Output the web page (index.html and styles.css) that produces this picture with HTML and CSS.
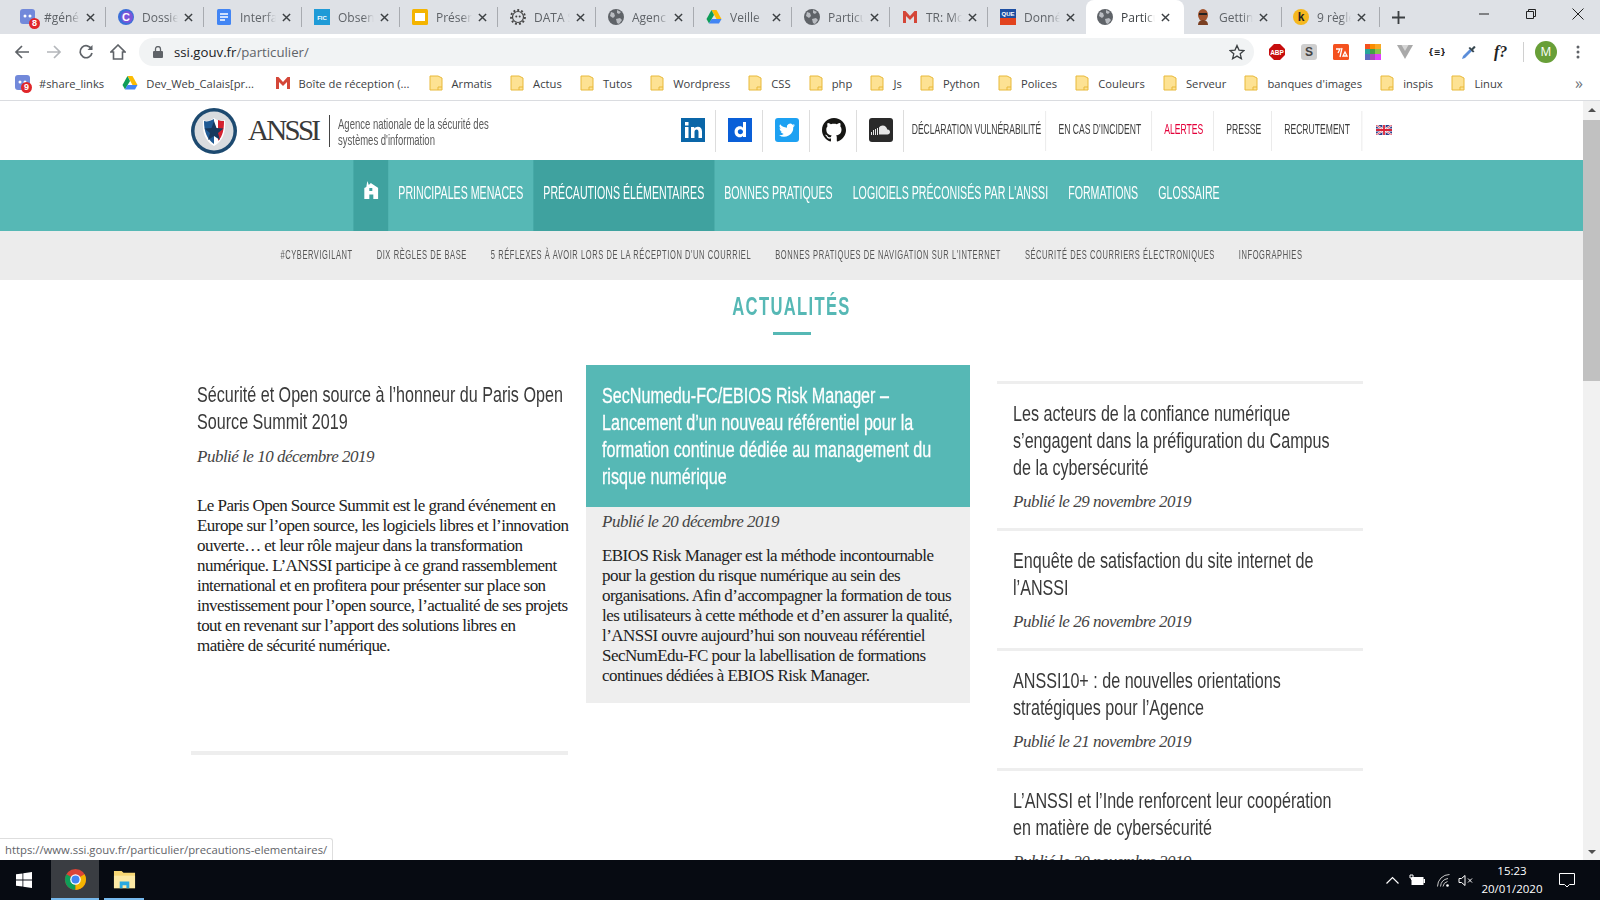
FILE: index.html
```html
<!DOCTYPE html>
<html lang="fr">
<head>
<meta charset="utf-8">
<title>Particuliers - ANSSI</title>
<link rel="stylesheet" href="styles.css">
</head>
<body>
<svg class="defs" width="0" height="0">
  <symbol id="i-globe" viewBox="0 0 16 16"><circle cx="8" cy="8" r="8" fill="#5f6368"/><path d="M3 3l3 1 1 3-2 2-3-2zM9 1l4 2-2 2-2-1zM8 10l4-1 2 2-3 4-2-1z" fill="#b9bcc1"/></symbol>
  <symbol id="i-discord" viewBox="0 0 16 16"><rect x="0" y="0" width="15" height="15" rx="3" fill="#7289da"/><circle cx="5" cy="7" r="1.5" fill="#fff"/><circle cx="10" cy="7" r="1.5" fill="#fff"/></symbol>
  <symbol id="i-drive" viewBox="0 0 16 16"><path d="M5.5 1h5l5 9h-5z" fill="#fbbc04"/><path d="M5.5 1L.5 10l2.500 4.500L8 6z" fill="#0f9d58"/><path d="M3 14.500h10l2.500-4.500h-10z" fill="#4285f4"/></symbol>
  <symbol id="i-gmail" viewBox="0 0 16 16"><path d="M1 2h2.500L8 7l4.500-5H15v12h-3V7L8 11 4 7v7H1z" fill="#d44638"/></symbol>
  <symbol id="i-folder" viewBox="0 0 14 16"><path d="M1 1h8l4 2v12H1z" fill="#fde293" stroke="#e8b93a"/><path d="M9 15v-3h4" fill="none" stroke="#e8b93a"/></symbol>
  <symbol id="i-close" viewBox="0 0 10 10"><path d="M1 1l8 8M9 1L1 9" stroke="#3c4043" stroke-width="1.600"/></symbol>
</svg>

<div class="tabstrip">
  <div class="tab">
    <svg class="fav"><use href="#i-discord"/></svg><span class="badge">8</span>
    <span class="tab-title">#géné</span><svg class="tab-x"><use href="#i-close"/></svg>
  </div>
  <div class="tab">
    <svg class="fav" viewBox="0 0 16 16"><circle cx="8" cy="8" r="8" fill="#3b6fd8"/><circle cx="9" cy="8" r="6" fill="#7b56d9"/><text x="8" y="11.500" class="fav-letter">C</text></svg>
    <span class="tab-title">Dossie</span><svg class="tab-x"><use href="#i-close"/></svg>
  </div>
  <div class="tab">
    <svg class="fav" viewBox="0 0 16 16"><rect x="1" width="14" height="16" rx="1.500" fill="#4285f4"/><path d="M4 5h8M4 8h8M4 11h5" stroke="#fff" stroke-width="1.300"/></svg>
    <span class="tab-title">Interfa</span><svg class="tab-x"><use href="#i-close"/></svg>
  </div>
  <div class="tab">
    <svg class="fav" viewBox="0 0 16 16"><rect width="16" height="16" fill="#1f9bd7"/><text x="8" y="11" class="fav-tiny">FIC</text></svg>
    <span class="tab-title">Obsen</span><svg class="tab-x"><use href="#i-close"/></svg>
  </div>
  <div class="tab">
    <svg class="fav" viewBox="0 0 16 16"><rect width="16" height="16" rx="1.500" fill="#f4b400"/><rect x="3" y="4" width="10" height="8" fill="#fff"/></svg>
    <span class="tab-title">Présen</span><svg class="tab-x"><use href="#i-close"/></svg>
  </div>
  <div class="tab">
    <svg class="fav" viewBox="0 0 16 16"><circle cx="8" cy="8" r="5.500" fill="none" stroke="#444" stroke-width="1.200"/><circle cx="8" cy="8" r="7" fill="none" stroke="#444" stroke-width="1.800" stroke-dasharray="2 2"/><circle cx="6.300" cy="7.500" r="1" fill="#444"/><circle cx="9.700" cy="7.500" r="1" fill="#444"/></svg>
    <span class="tab-title">DATA S</span><svg class="tab-x"><use href="#i-close"/></svg>
  </div>
  <div class="tab">
    <svg class="fav"><use href="#i-globe"/></svg>
    <span class="tab-title">Agenc</span><svg class="tab-x"><use href="#i-close"/></svg>
  </div>
  <div class="tab">
    <svg class="fav"><use href="#i-drive"/></svg>
    <span class="tab-title">Veille</span><svg class="tab-x"><use href="#i-close"/></svg>
  </div>
  <div class="tab">
    <svg class="fav"><use href="#i-globe"/></svg>
    <span class="tab-title">Particu</span><svg class="tab-x"><use href="#i-close"/></svg>
  </div>
  <div class="tab">
    <svg class="fav"><use href="#i-gmail"/></svg>
    <span class="tab-title">TR: Mc</span><svg class="tab-x"><use href="#i-close"/></svg>
  </div>
  <div class="tab tab-before-active">
    <svg class="fav" viewBox="0 0 16 16"><rect width="16" height="9" fill="#1d4fa3"/><rect y="9" width="16" height="7" fill="#e2431e"/><text x="8" y="7" class="fav-tiny">QUE</text></svg>
    <span class="tab-title">Donné</span><svg class="tab-x"><use href="#i-close"/></svg>
  </div>
  <div class="tab tab-active">
    <svg class="fav"><use href="#i-globe"/></svg>
    <span class="tab-title">Particu</span><svg class="tab-x"><use href="#i-close"/></svg>
  </div>
  <div class="tab">
    <svg class="fav" viewBox="0 0 16 16"><ellipse cx="8" cy="6" rx="5" ry="6" fill="#a0522d"/><rect x="4" y="4" width="8" height="2" fill="#222"/><path d="M3 16c0-4 3-5 5-5s5 1 5 5z" fill="#7a3f22"/></svg>
    <span class="tab-title">Gettin</span><svg class="tab-x"><use href="#i-close"/></svg>
  </div>
  <div class="tab">
    <svg class="fav" viewBox="0 0 16 16"><circle cx="8" cy="8" r="8" fill="#f5b81f"/><text x="8" y="12" class="fav-k">k</text></svg>
    <span class="tab-title">9 règle</span><svg class="tab-x"><use href="#i-close"/></svg>
  </div>
  <svg class="new-tab" viewBox="0 0 12 12"><path d="M6 0v12M0 6h12" stroke="#3c4043" stroke-width="1.700"/></svg>
  <div class="win-controls">
    <svg viewBox="0 0 12 12"><path d="M1 6h10" stroke="#222"/></svg>
    <svg viewBox="0 0 12 12"><path d="M1.500 3.500h7v7h-7zM3.500 3.500v-2h7v7h-2" fill="none" stroke="#222"/></svg>
    <svg viewBox="0 0 12 12"><path d="M.5.500l11 11M11.500.500l-11 11" stroke="#222"/></svg>
  </div>
</div>

<div class="toolbar">
  <svg class="tb-icon" viewBox="0 0 16 16"><path d="M15 8H2M8 2L2 8l6 6" fill="none" stroke="#5f6368" stroke-width="1.700"/></svg>
  <svg class="tb-icon" viewBox="0 0 16 16"><path d="M1 8h13M8 2l6 6-6 6" fill="none" stroke="#b4b7bb" stroke-width="1.700"/></svg>
  <svg class="tb-icon" viewBox="0 0 16 16"><path d="M13.500 5A6 6 0 1 0 14 9" fill="none" stroke="#5f6368" stroke-width="1.700"/><path d="M14.500 1v5h-5z" fill="#5f6368"/></svg>
  <svg class="tb-icon" viewBox="0 0 16 16"><path d="M8 1L1 8h2.500v7h9V8H15z" fill="none" stroke="#5f6368" stroke-width="1.600"/></svg>
  <div class="omnibox">
    <svg class="lock" viewBox="0 0 10 12"><rect y="5" width="10" height="7" rx="1" fill="#5f6368"/><path d="M2.500 5V3a2.500 2.500 0 0 1 5 0v2" fill="none" stroke="#5f6368" stroke-width="1.300"/></svg>
    <span class="url">ssi.gouv.fr<span class="url-path">/particulier/</span></span>
    <svg class="star" viewBox="0 0 16 16"><path d="M8 1.500l2 4.600 5 .4-3.800 3.300 1.200 4.900L8 12.100l-4.400 2.600 1.200-4.900L1 6.500l5-.4z" fill="none" stroke="#3c4043" stroke-width="1.300"/></svg>
  </div>
  <div class="extensions">
    <svg viewBox="0 0 16 16"><path d="M5 0h6l5 5v6l-5 5H5l-5-5V5z" fill="#c70d0d"/><text x="8" y="10.500" class="ext-abp">ABP</text></svg>
    <svg viewBox="0 0 16 16"><rect width="16" height="16" rx="3" fill="#cfcfcf"/><text x="8" y="12" class="ext-s">S</text></svg>
    <svg viewBox="0 0 16 16"><rect width="16" height="16" rx="1.500" fill="#f4511e"/><path d="M3 5h4L5 9M9 4l-2 9M10 12l2-4 2 4z" fill="none" stroke="#fff" stroke-width="1.300"/></svg>
    <svg viewBox="0 0 16 16"><rect width="6" height="6" fill="#f4511e"/><rect x="5" width="6" height="6" fill="#fb8c00"/><rect x="10" width="6" height="6" fill="#f9a825"/><rect y="5" width="6" height="6" fill="#26a69a"/><rect x="5" y="5" width="6" height="6" fill="#43a047"/><rect x="10" y="5" width="6" height="6" fill="#8bc34a"/><rect y="10" width="6" height="6" fill="#5c6bc0"/><rect x="5" y="10" width="6" height="6" fill="#ab47bc"/><rect x="10" y="10" width="6" height="6" fill="#e040fb"/></svg>
    <svg viewBox="0 0 16 16"><path d="M0 1h16L8 15z" fill="#a9a9a9"/><path d="M4.500 1h7L8 7z" fill="#d6d6d6"/></svg>
    <svg viewBox="0 0 16 16"><text x="8" y="11" class="ext-json">{≡}</text></svg>
    <svg viewBox="0 0 16 16"><path d="M1 15l1-3 7-7 2 2-7 7z" fill="#5b8dd9"/><path d="M9 3l1.500 1.500L13 2a1.500 1.500 0 0 1 1.500 1.500L12 6l1.500 1.500-1.500 1-4.500-4.500z" fill="#37474f"/></svg>
    <span class="ext-f">f?</span>
    <span class="ext-sep"></span>
    <span class="avatar">M</span>
    <svg class="ext-dots" viewBox="0 0 4 16"><circle cx="2" cy="3" r="1.500" fill="#5f6368"/><circle cx="2" cy="8" r="1.500" fill="#5f6368"/><circle cx="2" cy="13" r="1.500" fill="#5f6368"/></svg>
  </div>
</div>

<div class="bookmarks">
  <span class="bm bm-first"><svg class="bm-icon"><use href="#i-discord"/></svg><span class="badge badge-bm">9</span>#share_links</span>
  <span class="bm"><svg class="bm-icon"><use href="#i-drive"/></svg>Dev_Web_Calais[pr...</span>
  <span class="bm bm-mail"><svg class="bm-icon"><use href="#i-gmail"/></svg>Boîte de réception (...</span>
  <span class="bm bm-armatis"><svg class="bm-folder"><use href="#i-folder"/></svg>Armatis</span>
  <span class="bm"><svg class="bm-folder"><use href="#i-folder"/></svg>Actus</span>
  <span class="bm"><svg class="bm-folder"><use href="#i-folder"/></svg>Tutos</span>
  <span class="bm"><svg class="bm-folder"><use href="#i-folder"/></svg>Wordpress</span>
  <span class="bm"><svg class="bm-folder"><use href="#i-folder"/></svg>CSS</span>
  <span class="bm"><svg class="bm-folder"><use href="#i-folder"/></svg>php</span>
  <span class="bm"><svg class="bm-folder"><use href="#i-folder"/></svg>Js</span>
  <span class="bm"><svg class="bm-folder"><use href="#i-folder"/></svg>Python</span>
  <span class="bm"><svg class="bm-folder"><use href="#i-folder"/></svg>Polices</span>
  <span class="bm"><svg class="bm-folder"><use href="#i-folder"/></svg>Couleurs</span>
  <span class="bm"><svg class="bm-folder"><use href="#i-folder"/></svg>Serveur</span>
  <span class="bm"><svg class="bm-folder"><use href="#i-folder"/></svg>banques d'images</span>
  <span class="bm"><svg class="bm-folder"><use href="#i-folder"/></svg>inspis</span>
  <span class="bm"><svg class="bm-folder"><use href="#i-folder"/></svg>Linux</span>
  <span class="bm-more">»</span>
</div>

<div class="viewport">
  <div class="page">
    <header class="site-header">
      <div class="container header-row">
        <svg class="logo" viewBox="0 0 46 46">
          <circle cx="23" cy="23" r="23" fill="#1d4a70"/>
          <circle cx="23" cy="23" r="19.500" fill="#d9dcdf"/>
          <path d="M12 12c4 2 7 1 11-2 4 3 7 4 11 2 1 12-2 21-11 26-9-5-12-14-11-26z" fill="#fff"/>
          <path d="M13 13c3 1 6 0 10-2v25c-7-5-10-12-10-23z" fill="#1f5a94"/>
          <path d="M27 12c2 1 4 1 6 1 0 8-1 15-6 20z" fill="#d4222f"/>
          <path d="M23 13l2.500 7 7 .5-5.500 4.500 2 7-6-4-6 4 2-7-5.500-4.500 7-.5z" fill="#17385c"/>
        </svg>
        <span class="wordmark">ANSSI</span>
        <span class="tagline"><span class="tagline-text">Agence nationale de la sécurité des<br>systèmes d'information</span></span>
        <ul class="socials">
          <li><svg viewBox="0 0 24 24"><rect width="24" height="24" fill="#0a66a8"/><path d="M4 9h3.500v11H4zM4 4h3.500v3.500H4zM10 9h3.300v1.600c.8-1.200 2-1.900 3.500-1.900 2.700 0 4.200 1.700 4.200 4.900V20h-3.500v-5.700c0-1.800-.6-2.700-1.900-2.700s-2.100 1-2.100 2.700V20H10z" fill="#fff"/></svg></li>
          <li><svg viewBox="0 0 24 24"><rect width="24" height="24" fill="#0a5fd8"/><path d="M15 4h3v15h-3v-1.200c-.9 1-2 1.500-3.400 1.500-3 0-5-2.400-5-5.500s2-5.500 5-5.500c1.400 0 2.500.5 3.400 1.400zm-2.700 7.300c-1.500 0-2.500 1.100-2.500 2.500s1 2.500 2.500 2.500 2.700-1.100 2.700-2.500-1.200-2.500-2.700-2.500z" fill="#fff"/></svg></li>
          <li><svg viewBox="0 0 24 24"><rect width="24" height="24" rx="3" fill="#1da1f2"/><path d="M20 7.200c-.6.300-1.200.4-1.900.5.700-.4 1.200-1 1.400-1.800-.6.400-1.300.6-2 .8a3.300 3.300 0 0 0-5.600 3A9.300 9.300 0 0 1 5.100 6.300a3.300 3.300 0 0 0 1 4.400c-.5 0-1-.2-1.500-.4 0 1.600 1.100 3 2.600 3.300-.5.100-1 .1-1.500 0 .4 1.300 1.600 2.200 3 2.300A6.600 6.600 0 0 1 4 17.200a9.300 9.300 0 0 0 14.300-8.300c.7-.4 1.200-1 1.700-1.700z" fill="#fff"/></svg></li>
          <li><svg viewBox="0 0 24 24"><path d="M12 0C5.400 0 0 5.400 0 12c0 5.300 3.400 9.800 8.200 11.400.6.100.8-.3.800-.6v-2.200c-3.300.7-4-1.400-4-1.400-.6-1.400-1.400-1.800-1.400-1.800-1.100-.7.100-.7.100-.7 1.200.1 1.800 1.200 1.800 1.200 1.100 1.800 2.800 1.300 3.500 1 .1-.8.400-1.300.8-1.600-2.700-.3-5.500-1.300-5.500-5.900 0-1.300.5-2.400 1.200-3.200-.1-.3-.5-1.500.1-3.200 0 0 1-.3 3.300 1.200 1-.3 2-.4 3-.4s2 .1 3 .4c2.300-1.500 3.300-1.200 3.300-1.200.7 1.700.2 2.900.1 3.200.8.800 1.200 1.900 1.200 3.200 0 4.600-2.800 5.600-5.500 5.900.4.400.8 1.100.8 2.200v3.300c0 .3.200.7.800.6C20.600 21.800 24 17.300 24 12 24 5.400 18.600 0 12 0z" fill="#161614"/></svg></li>
          <li><svg viewBox="0 0 24 24"><rect width="24" height="24" rx="3" fill="#2a2a2a"/><path d="M10 9.500c.8-1.200 2.200-2 3.700-2 2.400 0 4.300 1.800 4.500 4.100 1.500-.3 2.800.9 2.800 2.400s-1.100 2.500-2.500 2.500H10zM2 14h1v3H2zM4 12h1v5H4zM6 11h1v6H6zM8 10h1v7H8z" fill="#e6e6e6"/></svg></li>
        </ul>
        <div class="top-links">
          <ul class="top-links-list">
            <li class="first">DÉCLARATION VULNÉRABILITÉ</li>
            <li>EN CAS D'INCIDENT</li>
            <li class="alert">ALERTES</li>
            <li>PRESSE</li>
            <li class="last">RECRUTEMENT</li>
          </ul>
        </div>
        <svg class="flag" viewBox="0 0 16 10"><rect width="16" height="10" fill="#2b3f8c"/><path d="M0 0l16 10M16 0L0 10" stroke="#fff" stroke-width="2"/><path d="M0 0l16 10M16 0L0 10" stroke="#d8243a" stroke-width=".8"/><path d="M8 0v10M0 5h16" stroke="#fff" stroke-width="3.200"/><path d="M8 0v10M0 5h16" stroke="#d8243a" stroke-width="1.800"/></svg>
      </div>
    </header>

    <nav class="main-nav">
      <ul class="main-nav-list">
        <li class="home"><svg viewBox="0 0 15 18"><path d="M1 18V7l2-1 1-6 1.500 4L7.500 2 15 7v11h-5v-4.500H6V18zM6 7v3h3V7z" fill="#fff" fill-rule="evenodd"/></svg></li>
        <li>PRINCIPALES MENACES</li>
        <li class="active">PRÉCAUTIONS ÉLÉMENTAIRES</li>
        <li>BONNES PRATIQUES</li>
        <li>LOGICIELS PRÉCONISÉS PAR L'ANSSI</li>
        <li>FORMATIONS</li>
        <li>GLOSSAIRE</li>
      </ul>
    </nav>

    <nav class="sub-nav">
      <ul class="sub-nav-list">
        <li>#CYBERVIGILANT</li>
        <li>DIX RÈGLES DE BASE</li>
        <li>5 RÉFLEXES À AVOIR LORS DE LA RÉCEPTION D'UN COURRIEL</li>
        <li>BONNES PRATIQUES DE NAVIGATION SUR L'INTERNET</li>
        <li>SÉCURITÉ DES COURRIERS ÉLECTRONIQUES</li>
        <li>INFOGRAPHIES</li>
      </ul>
    </nav>

    <main class="container">
      <h1 class="section-title"><span>ACTUALITÉS</span></h1>
      <div class="news">
        <article class="col-left">
          <h2 class="news-title">Sécurité et Open source à l’honneur du Paris Open<br>Source Summit 2019</h2>
          <p class="news-date">Publié le 10 décembre 2019</p>
          <p class="news-body news-body-left">Le Paris Open Source Summit est le grand événement en<br>Europe sur l’open source, les logiciels libres et l’innovation<br>ouverte… et leur rôle majeur dans la transformation<br>numérique. L’ANSSI participe à ce grand rassemblement<br>international et en profitera pour présenter sur place son<br>investissement pour l’open source, l’actualité de ses projets<br>tout en revenant sur l’apport des solutions libres en<br>matière de sécurité numérique.</p>
        </article>
        <article class="col-mid">
          <div class="feature-head">
            <h2 class="news-title news-title-feature">SecNumedu-FC/EBIOS Risk Manager –<br>Lancement d’un nouveau référentiel pour la<br>formation continue dédiée au management du<br>risque numérique</h2>
          </div>
          <div class="feature-text">
            <p class="news-date">Publié le 20 décembre 2019</p>
            <p class="news-body news-body-mid">EBIOS Risk Manager est la méthode incontournable<br>pour la gestion du risque numérique au sein des<br>organisations. Afin d’accompagner la formation de tous<br>les utilisateurs à cette méthode et d’en assurer la qualité,<br>l’ANSSI ouvre aujourd’hui son nouveau référentiel<br>SecNumEdu-FC pour la labellisation de formations<br>continues dédiées à EBIOS Risk Manager.</p>
          </div>
        </article>
        <div class="col-right">
          <article class="side-item">
            <h2 class="news-title">Les acteurs de la confiance numérique<br>s’engagent dans la préfiguration du Campus<br>de la cybersécurité</h2>
            <p class="news-date">Publié le 29 novembre 2019</p>
          </article>
          <article class="side-item">
            <h2 class="news-title">Enquête de satisfaction du site internet de<br>l’ANSSI</h2>
            <p class="news-date">Publié le 26 novembre 2019</p>
          </article>
          <article class="side-item">
            <h2 class="news-title">ANSSI10+ : de nouvelles orientations<br>stratégiques pour l’Agence</h2>
            <p class="news-date">Publié le 21 novembre 2019</p>
          </article>
          <article class="side-item">
            <h2 class="news-title">L’ANSSI et l’Inde renforcent leur coopération<br>en matière de cybersécurité</h2>
            <p class="news-date">Publié le 20 novembre 2019</p>
          </article>
        </div>
      </div>
    </main>
  </div>

  <div class="scrollbar">
    <span class="arrow arrow-up"></span>
    <div class="scroll-track"><div class="scroll-thumb"></div></div>
    <span class="arrow arrow-down"></span>
  </div>

  <div class="status-bubble">https://www.ssi.gouv.fr/particulier/precautions-elementaires/</div>
</div>

<footer class="taskbar">
  <svg class="win-logo" viewBox="0 0 16 16"><path d="M0 2.300l6.500-.9v6.200H0zM7.300 1.300L16 0v7.600H7.300zM0 8.400h6.500v6.200L0 13.700zM7.300 8.400H16V16l-8.700-1.300z" fill="#fff"/></svg>
  <div class="task task-active">
    <svg viewBox="0 0 24 24"><circle cx="12" cy="12" r="11" fill="#db4437"/><path d="M12 12L2.500 6.500A11 11 0 0 0 12 23z" fill="#0f9d58"/><path d="M12 12l9.500-5.500A11 11 0 0 1 12 23z" fill="#f4b400"/><circle cx="12" cy="12" r="5.500" fill="#fff"/><circle cx="12" cy="12" r="4.200" fill="#4285f4"/></svg>
  </div>
  <div class="task task-folder">
    <svg viewBox="0 0 24 24"><path d="M1 3h8l2 2h12v16H1z" fill="#f7d774"/><rect x="1" y="8" width="22" height="13" fill="#fce9a4"/><path d="M7 21v-7h10v7h-3v-3h-4v3z" fill="#2aa9e0"/></svg>
  </div>
  <div class="tray">
    <svg class="tray-chevron" viewBox="0 0 13 8"><path d="M.5 7.500L6.500 1.500l6 6" fill="none" stroke="#fff" stroke-width="1.200"/></svg>
    <svg class="tray-battery" viewBox="0 0 16 12"><path d="M1 1h3v3H1zM2.500 4v2" fill="none" stroke="#fff"/><rect x="3" y="3.500" width="11" height="7" fill="#fff" stroke="#fff"/><rect x="14.500" y="5" width="1.500" height="4" fill="#fff"/></svg>
    <svg class="tray-wifi" viewBox="0 0 13 13"><path d="M.5 12.500A12 12 0 0 1 12.500.500M3.500 12.500A9 9 0 0 1 11 4.500M6 12.500A6 6 0 0 1 10.500 7.500" fill="none" stroke="#c8c8c8" stroke-width="1"/><circle cx="10.500" cy="11.500" r="1.300" fill="#fff"/></svg>
    <svg class="tray-sound" viewBox="0 0 15 13"><path d="M1 4.500h2.500L7 1.500v10L3.500 8.500H1z" fill="none" stroke="#fff"/><path d="M10 4.500l4 4M14 4.500l-4 4" stroke="#fff"/></svg>
    <div class="clock"><span>15:23</span><span>20/01/2020</span></div>
    <svg class="tray-notify" viewBox="0 0 16 15"><path d="M.5.500h15v11h-5l-2.500 2.500-2.500-2.500h-5z" fill="none" stroke="#fff"/></svg>
  </div>
</footer>
</body>
</html>
```

FILE: styles.css
```css
* {
  box-sizing: border-box;
}
html, body {
  margin: 0;
  height: 100%;
  overflow: hidden;
}
body {
  width: 1600px;
  height: 900px;
  display: flex;
  flex-direction: column;
  background: #fff;
  font-family: "Open Sans", "Noto Sans", sans-serif;
}
ul {
  list-style: none;
  margin: 0;
  padding: 0;
}
h1, h2, p {
  margin: 0;
  font-weight: normal;
}
.defs {
  position: absolute;
}

/* browser tabs */
.tabstrip {
  height: 34px;
  flex: none;
  display: flex;
  padding-left: 8px;
  background: #dee1e6;
}
.tab {
  position: relative;
  width: 98px;
  height: 34px;
  flex: none;
  display: flex;
  align-items: center;
  padding-left: 12px;
  font-size: 12px;
  color: #5f6368;
}
.tab::after {
  content: "";
  position: absolute;
  right: 0;
  top: 7px;
  width: 1px;
  height: 20px;
  background: #a8abb0;
}
.tab-before-active::after, .tab-active::after {
  display: none;
}
.tab-active {
  background: #fff;
  border-radius: 8px 8px 0 0;
  color: #3c4043;
}
.tab-active, .tab-active ~ .tab {
  padding-left: 11px;
}
.tab-active .tab-title, .tab-active ~ .tab .tab-title {
  width: 34px;
}
.fav {
  width: 16px;
  height: 16px;
  flex: none;
}
.fav-letter {
  font: bold 11px "Liberation Sans", sans-serif;
  fill: #fff;
  text-anchor: middle;
}
.fav-tiny {
  font: bold 6px "Liberation Sans", sans-serif;
  fill: #fff;
  text-anchor: middle;
}
.fav-k {
  font: bold 12px "Liberation Sans", sans-serif;
  fill: #222;
  text-anchor: middle;
}
.badge {
  position: absolute;
  left: 21px;
  top: 18px;
  width: 11px;
  height: 11px;
  border-radius: 50%;
  background: #e0262a;
  color: #fff;
  font: bold 9px/11px "Liberation Sans", sans-serif;
  text-align: center;
}
.tab-title {
  width: 36px;
  margin-left: 8px;
  white-space: nowrap;
  -webkit-mask-image: linear-gradient(to right, #000 70%, transparent);
  mask-image: linear-gradient(to right, #000 70%, transparent);
}
.tab-x {
  width: 9px;
  height: 9px;
  margin-left: 6px;
  flex: none;
}
.new-tab {
  width: 13px;
  height: 13px;
  margin: 11px 0 0 12px;
  flex: none;
}
.win-controls {
  margin-left: auto;
  display: flex;
  gap: 35px;
  padding: 8px 16px 0 0;
}
.win-controls svg {
  width: 12px;
  height: 12px;
}

/* browser toolbar */
.toolbar {
  height: 34px;
  flex: none;
  display: flex;
  align-items: center;
  padding: 2px 0 0 14px;
  background: #fff;
}
.tb-icon {
  width: 16px;
  height: 16px;
  margin-right: 16px;
  flex: none;
}
.toolbar .tb-icon:nth-child(4) {
  margin-right: 13px;
}
.omnibox {
  width: 1115px;
  height: 28px;
  flex: none;
  display: flex;
  align-items: center;
  padding: 0 9px 0 14px;
  border-radius: 14px;
  background: #f1f3f4;
}
.lock {
  width: 10px;
  height: 12px;
  margin-right: 11px;
}
.url {
  font-size: 13.200px;
  color: #202124;
}
.url-path {
  color: #5f6368;
}
.star {
  width: 16px;
  height: 16px;
  margin-left: auto;
}
.extensions {
  display: flex;
  align-items: center;
  margin-left: 15px;
}
.extensions svg {
  width: 16px;
  height: 16px;
  margin-right: 16px;
  flex: none;
}
.ext-abp {
  font: bold 6.500px "Liberation Sans", sans-serif;
  fill: #fff;
  text-anchor: middle;
}
.ext-s {
  font: bold 12px "Liberation Sans", sans-serif;
  fill: #444;
  text-anchor: middle;
}
.ext-json {
  font: bold 8px "DejaVu Sans", sans-serif;
  fill: #222;
  text-anchor: middle;
}
.ext-f {
  width: 17px;
  margin-left: 1px;
  font: italic bold 16px "Liberation Serif", serif;
  color: #222;
}
.ext-sep {
  width: 1px;
  height: 20px;
  margin: 0 11px 0 12px;
  background: #d0d0d0;
}
.avatar {
  width: 22px;
  height: 22px;
  flex: none;
  border-radius: 50%;
  background: #689f38;
  color: #fff;
  font-size: 12px;
  line-height: 22px;
  text-align: center;
}
.extensions .ext-dots {
  width: 4px;
  margin: 0 0 0 19px;
}

/* bookmarks bar */
.bookmarks {
  height: 33px;
  flex: none;
  display: flex;
  align-items: center;
  gap: 18.200px;
  padding: 0 0 2px 15px;
  background: #fff;
  border-bottom: 1px solid #dadce0;
  font-size: 11.200px;
  color: #3c4043;
}
.bm {
  position: relative;
  display: flex;
  align-items: center;
  white-space: nowrap;
}
.bm-mail {
  margin-left: 2.500px;
}
.bm-armatis {
  margin-left: 1px;
}
.bm-icon {
  width: 16px;
  height: 16px;
  margin-right: 8px;
  flex: none;
}
.bm-folder {
  width: 14px;
  height: 16px;
  margin-right: 9px;
  flex: none;
}
.badge-bm {
  left: 6px;
  top: 7px;
}
.bm-more {
  margin-left: auto;
  margin-right: 17px;
  font-size: 16px;
  color: #70757a;
}

/* page */
.viewport {
  position: relative;
  flex: 1;
  min-height: 0;
  display: flex;
}
.page {
  flex: 1;
  min-width: 0;
  overflow: hidden;
}
.container {
  width: 1201px;
  margin: 0 auto;
}
.header-row {
  height: 59px;
  display: flex;
  align-items: center;
}
.logo {
  width: 46px;
  height: 46px;
  flex: none;
}
.wordmark {
  margin-left: 11px;
  font: 29px "Liberation Serif", serif;
  letter-spacing: -2.700px;
  color: #3a3a3a;
}
.tagline {
  height: 32px;
  width: 170px;
  margin-left: 11px;
  padding: 1px 0 0 8px;
  border-left: 1px solid #444;
  flex: none;
}
.tagline-text {
  display: block;
  width: 240px;
  font: 15px/16px "Liberation Sans", sans-serif;
  color: #5a5a5a;
  white-space: nowrap;
  transform: scaleX(.634);
  transform-origin: left;
}
.socials {
  display: flex;
  margin-left: auto;
}
.socials li {
  width: 47px;
  height: 42px;
  display: flex;
  align-items: center;
  justify-content: center;
  padding: 0 0 2px 2px;
  border-right: 1px solid #ddd;
}
.socials svg {
  width: 24px;
  height: 24px;
}
.top-links {
  width: 457px;
  flex: none;
}
.top-links-list {
  display: flex;
  width: 772px;
  transform: scaleX(.592);
  transform-origin: left;
  font: 14.500px "Liberation Sans", sans-serif;
  color: #3d3d3d;
  white-space: nowrap;
}
.top-links-list li {
  height: 40px;
  line-height: 36px;
  padding: 0 17px 0 21px;
  border-right: 1.700px solid #ddd;
}
.top-links-list .first {
  padding-left: 13px;
  padding-right: 7px;
}
.top-links-list .last {
  padding-right: 20px;
}
.top-links-list .alert {
  color: #e4003a;
}
.flag {
  width: 16px;
  height: 10px;
  margin: 0 0 2px 15px;
  flex: none;
}

.main-nav {
  height: 71px;
  background: #56b8b5;
}
.main-nav-list {
  display: flex;
  justify-content: center;
  width: calc(100% / .59);
  height: 71px;
  transform: scaleX(.59);
  transform-origin: left;
  font: 18px/67px "Liberation Sans", sans-serif;
  color: #fff;
  white-space: nowrap;
}
.main-nav-list li {
  padding: 0 17px;
}
.main-nav-list .active, .main-nav-list .home {
  background: #3fa29f;
}
.main-nav-list .home {
  width: 59.300px;
  padding: 21px 0 0;
  flex: none;
}
.home svg {
  display: block;
  width: 15px;
  height: 18px;
  margin: 0 auto;
  transform: scaleX(1.695);
}

.sub-nav {
  height: 49px;
  background: #ececec;
}
.sub-nav-list {
  display: flex;
  justify-content: center;
  gap: 41.500px;
  width: calc(100% / .578);
  transform: scaleX(.578);
  transform-origin: left;
  font: 13px/48px "Liberation Sans", sans-serif;
  letter-spacing: 1px;
  color: #555;
  white-space: nowrap;
}

.section-title {
  height: 85px;
  padding-top: 11px;
  text-align: center;
  font: bold 25px/30px "Liberation Sans", sans-serif;
  letter-spacing: 2px;
  color: #56b8b5;
}
.section-title span {
  display: block;
  transform: scaleX(.664);
}
.section-title::after {
  content: "";
  display: block;
  width: 38px;
  height: 3px;
  margin: 11px auto 0;
  background: #56b8b5;
}
.news {
  display: flex;
  align-items: flex-start;
}
.news-title {
  width: 520px;
  font: 22.500px/27px "Liberation Sans", sans-serif;
  color: #3a3a3a;
  white-space: nowrap;
  transform: scaleX(.717);
  transform-origin: left;
}
.news-title-feature {
  color: #fff;
  -webkit-text-stroke: .3px #fff;
}
.news-date {
  font: italic 17px/20px "Liberation Serif", serif;
  letter-spacing: -.5px;
  color: #444;
}
.news-body {
  font: 17px/20px "Liberation Serif", serif;
  letter-spacing: -.55px;
  color: #222;
  white-space: nowrap;
}
.col-left {
  width: 377px;
  height: 390px;
  margin-right: 18px;
  padding: 16px 6px 0;
  border-bottom: 4px solid #eee;
}
.col-left .news-date {
  margin-top: 12px;
}
.news-body-left {
  margin-top: 29px;
}
.col-mid {
  width: 384px;
  margin-right: 27px;
  background: #eee;
}
.feature-head {
  height: 142px;
  padding: 17px 16px 0;
  background: #56b8b5;
}
.feature-text {
  padding: 5px 16px 17px;
}
.news-body-mid {
  margin-top: 14px;
}
.col-right {
  width: 366px;
  margin-top: 16px;
}
.side-item {
  padding: 16px 16px 16px;
  border-top: 3px solid #eee;
}
.side-item .news-date {
  margin-top: 11px;
}

/* scrollbar and status */
.scrollbar {
  width: 17px;
  flex: none;
  display: flex;
  flex-direction: column;
  background: #f1f1f1;
}
.arrow {
  height: 17px;
  flex: none;
  display: flex;
  align-items: center;
  justify-content: center;
}
.arrow::before {
  content: "";
  border-left: 4px solid transparent;
  border-right: 4px solid transparent;
}
.arrow-up::before {
  border-bottom: 4px solid #505050;
}
.arrow-down::before {
  border-top: 4px solid #505050;
}
.scroll-track {
  flex: 1;
  padding-top: 2px;
}
.scroll-thumb {
  height: 261px;
  background: #c1c1c1;
}
.status-bubble {
  position: absolute;
  left: 0;
  bottom: 0;
  width: 333px;
  height: 22px;
  padding-left: 5px;
  background: #fff;
  border-top: 1px solid #dedede;
  border-right: 1px solid #dedede;
  border-top-right-radius: 3px;
  font-size: 11.300px;
  line-height: 21px;
  color: #5f6368;
  white-space: nowrap;
}

/* windows taskbar */
.taskbar {
  height: 40px;
  flex: none;
  display: flex;
  align-items: stretch;
  background: #070b12;
  color: #fff;
}
.win-logo {
  width: 16px;
  height: 16px;
  margin: 12px 19px 0 16px;
  flex: none;
}
.task {
  width: 48px;
  display: flex;
  align-items: center;
  justify-content: center;
  border-bottom: 2px solid #76b9ed;
  margin-right: 5px;
}
.task-active {
  background: #3a3d42;
}
.task-folder {
  width: 40px;
}
.task svg {
  width: 23px;
  height: 23px;
}
.tray {
  margin-left: auto;
  display: flex;
  align-items: center;
  padding-right: 25px;
}
.tray-chevron {
  width: 13px;
  height: 8px;
  margin-right: 10px;
}
.tray-battery {
  width: 16px;
  height: 12px;
  margin-right: 12px;
}
.tray-wifi {
  width: 13px;
  height: 13px;
  margin-right: 8px;
}
.tray-sound {
  width: 15px;
  height: 13px;
  margin-right: 6px;
}
.clock {
  width: 66px;
  display: flex;
  flex-direction: column;
  align-items: center;
  font-size: 11.500px;
  line-height: 18px;
  margin-right: 14px;
}
.tray-notify {
  width: 16px;
  height: 15px;
}
```
